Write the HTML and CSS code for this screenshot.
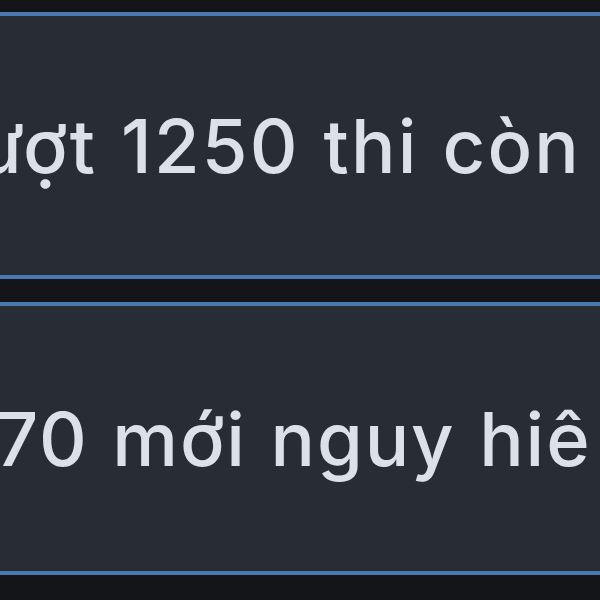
FILE: index.html
```html
<!DOCTYPE html>
<html lang="vi">
<head>
    <meta charset="UTF-8">
    <meta name="viewport" content="width=device-width, initial-scale=1.0">
    <title>Ghi chú</title>
    <link rel="stylesheet" href="styles.css">
</head>
<body>
    <div class="list">
        <div class="card">
            <p class="line first">ượt 1250 thi còn</p>
        </div>
        <div class="card">
            <p class="line second">70 mới nguy hiê</p>
        </div>
    </div>
</body>
</html>
```

FILE: styles.css
```css
html, body {
    margin: 0;
    height: 100%;
}
body {
    background: #131519;
    font-family: Inter, "Noto Sans", sans-serif;
    overflow: hidden;
}
.list {
    display: flex;
    flex-direction: column;
    gap: 23px;
    padding-top: 12px;
}
.card {
    background: #282c35;
    border-top: 4px solid #4a78b0;
    border-bottom: 4px solid #4a78b0;
    display: flex;
    align-items: center;
    overflow: hidden;
}
.card:first-child {
    height: 259px;
}
.card:last-child {
    height: 265px;
}
.line {
    margin: 0;
    white-space: nowrap;
    font-size: 74px;
    font-weight: 500;
    letter-spacing: 2.2px;
    word-spacing: 2px;
    color: #dde1e7;
}
.first {
    margin-left: -23px;
}
.second {
    margin-left: -4px;
    letter-spacing: 1.9px;
}
```
